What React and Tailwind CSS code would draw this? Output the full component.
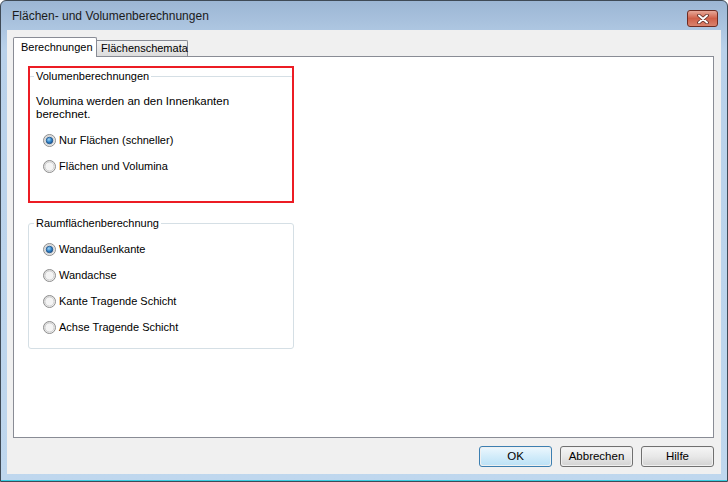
import React from 'react';

const font = { fontFamily: '"Liberation Sans", Arial, sans-serif' };

function Radio({ checked }) {
  return (
    <svg width="13" height="13" viewBox="0 0 13 13" className="shrink-0">
      <defs>
        <linearGradient id="rbg" x1="0" y1="0" x2="1" y2="1">
          <stop offset="0" stopColor="#d9d9d9" />
          <stop offset="1" stopColor="#fbfbfb" />
        </linearGradient>
        <radialGradient id="rdot" cx="0.4" cy="0.35" r="0.7">
          <stop offset="0" stopColor="#9fd4f6" />
          <stop offset="0.6" stopColor="#2a7ec4" />
          <stop offset="1" stopColor="#1b4f8a" />
        </radialGradient>
      </defs>
      <circle cx="6.5" cy="6.5" r="6" fill="url(#rbg)" stroke="#8d8d8d" />
      <circle cx="6.5" cy="6.5" r="4.5" fill="#f4f4f4" stroke="#c8c8c8" strokeWidth="0.8" />
      {checked && <circle cx="6.5" cy="6.5" r="3.3" fill="url(#rdot)" stroke="#1e4f84" strokeWidth="0.8" />}
    </svg>
  );
}

function RadioRow({ label, checked }) {
  return (
    <div className="h-[26px] flex items-center pl-[14px] gap-[3px]">
      <Radio checked={checked} />
      <span className="text-[11px] leading-[13px] text-black">{label}</span>
    </div>
  );
}

function WinButton({ children, primary }) {
  return (
    <div
      className={
        'w-[73px] h-[21px] rounded-[3px] border p-px ' +
        (primary ? 'border-[#3c7fb1]' : 'border-[#707070]')
      }
    >
      <div
        className={
          'h-full rounded-[2px] flex items-center justify-center text-[11.5px] text-black ' +
          (primary
            ? 'bg-gradient-to-b from-[#eaf6fd] via-[#d2ecfa] to-[#bde2f6]'
            : 'bg-gradient-to-b from-[#f4f4f4] via-[#e8e8e8] to-[#d4d4d4]')
        }
      >
        {children}
      </div>
    </div>
  );
}

export default function App() {
  return (
    <div style={font} className="w-[728px] h-[482px] overflow-hidden bg-white">
      <div className="w-full h-full flex flex-col rounded-t-[6px] border border-[#3f4a56] bg-gradient-to-b from-[#9cb6d4] via-[#b9d1ea] via-[10%] to-[#bfd7ee]">
        {/* title bar */}
        <div className="h-[29px] flex items-center justify-between pl-[11px] pr-[9px]">
          <span className="text-[12px] text-[#1a1a1a] pt-[1px]">Flächen- und Volumenberechnungen</span>
          <div className="w-[31px] h-[17px] mt-[6px] rounded-[3px] border border-[#6e2c22] bg-gradient-to-b from-[#e6a899] via-[#cf5f48] via-[50%] to-[#d9836d] flex items-center justify-center">
            <svg width="12" height="10" viewBox="0 0 12 10">
              <path d="M2 1.5 L10 8.5 M10 1.5 L2 8.5" stroke="#5a2a24" strokeWidth="3.6" strokeLinecap="round" />
              <path d="M2 1.5 L10 8.5 M10 1.5 L2 8.5" stroke="#ffffff" strokeWidth="2" strokeLinecap="round" />
            </svg>
          </div>
        </div>

        {/* client */}
        <div className="flex-1 mx-[6px] mb-[6px] bg-[#f0f0f0] flex flex-col pl-[6px] pr-[7px] pt-[7px] pb-[7px]">
          <div className="flex items-end h-[20px] -mb-px relative z-10">
            <div className="w-[84px] h-[20px] bg-white border border-b-0 border-[#898c95] rounded-t-[2px] flex items-center pl-[7px] text-[11px] text-black">
              Berechnungen
            </div>
            <div className="w-[91px] h-[16px] mb-px bg-gradient-to-b from-[#f3f3f3] to-[#dcdcdc] border border-l-0 border-b-0 border-[#898c95] rounded-tr-[2px] flex items-center pl-[4px] text-[11px] text-black">
              Flächenschemata
            </div>
          </div>

          <div className="flex-1 bg-white border border-[#898c95] pl-[14px] pt-[12px]">
            <div className="relative w-[266px]">
              <fieldset className="border border-[#d5dfe5] rounded-[3px] h-[133px]">
                <legend className="ml-[5px] px-[2px] text-[11px] leading-[14px] text-black">Volumenberechnungen</legend>
                <div className="pl-[7px] pt-[12px] text-[11.5px] leading-[13px] text-black">
                  Volumina werden an den Innenkanten
                  <br />
                  berechnet.
                </div>
                <div className="mt-[6px]">
                  <RadioRow label="Nur Flächen (schneller)" checked />
                  <RadioRow label="Flächen und Volumina" />
                </div>
              </fieldset>
              <div className="absolute left-0 top-[-3px] w-[266px] h-[137px] border-2 border-[#ec1c24] pointer-events-none" />
            </div>

            <fieldset className="mt-[14px] w-[266px] border border-[#d5dfe5] rounded-[3px] pb-[8px]">
              <legend className="ml-[5px] px-[2px] text-[11px] leading-[14px] text-black">Raumflächenberechnung</legend>
              <div className="pt-[6px]">
                <RadioRow label="Wandaußenkante" checked />
                <RadioRow label="Wandachse" />
                <RadioRow label="Kante Tragende Schicht" />
                <RadioRow label="Achse Tragende Schicht" />
              </div>
            </fieldset>
          </div>

          <div className="h-[29px] pt-[8px] flex justify-end gap-[8px]">
            <WinButton primary>OK</WinButton>
            <WinButton>Abbrechen</WinButton>
            <WinButton>Hilfe</WinButton>
          </div>
        </div>
        <div className="h-px bg-[#39cde0]" />
      </div>
    </div>
  );
}
